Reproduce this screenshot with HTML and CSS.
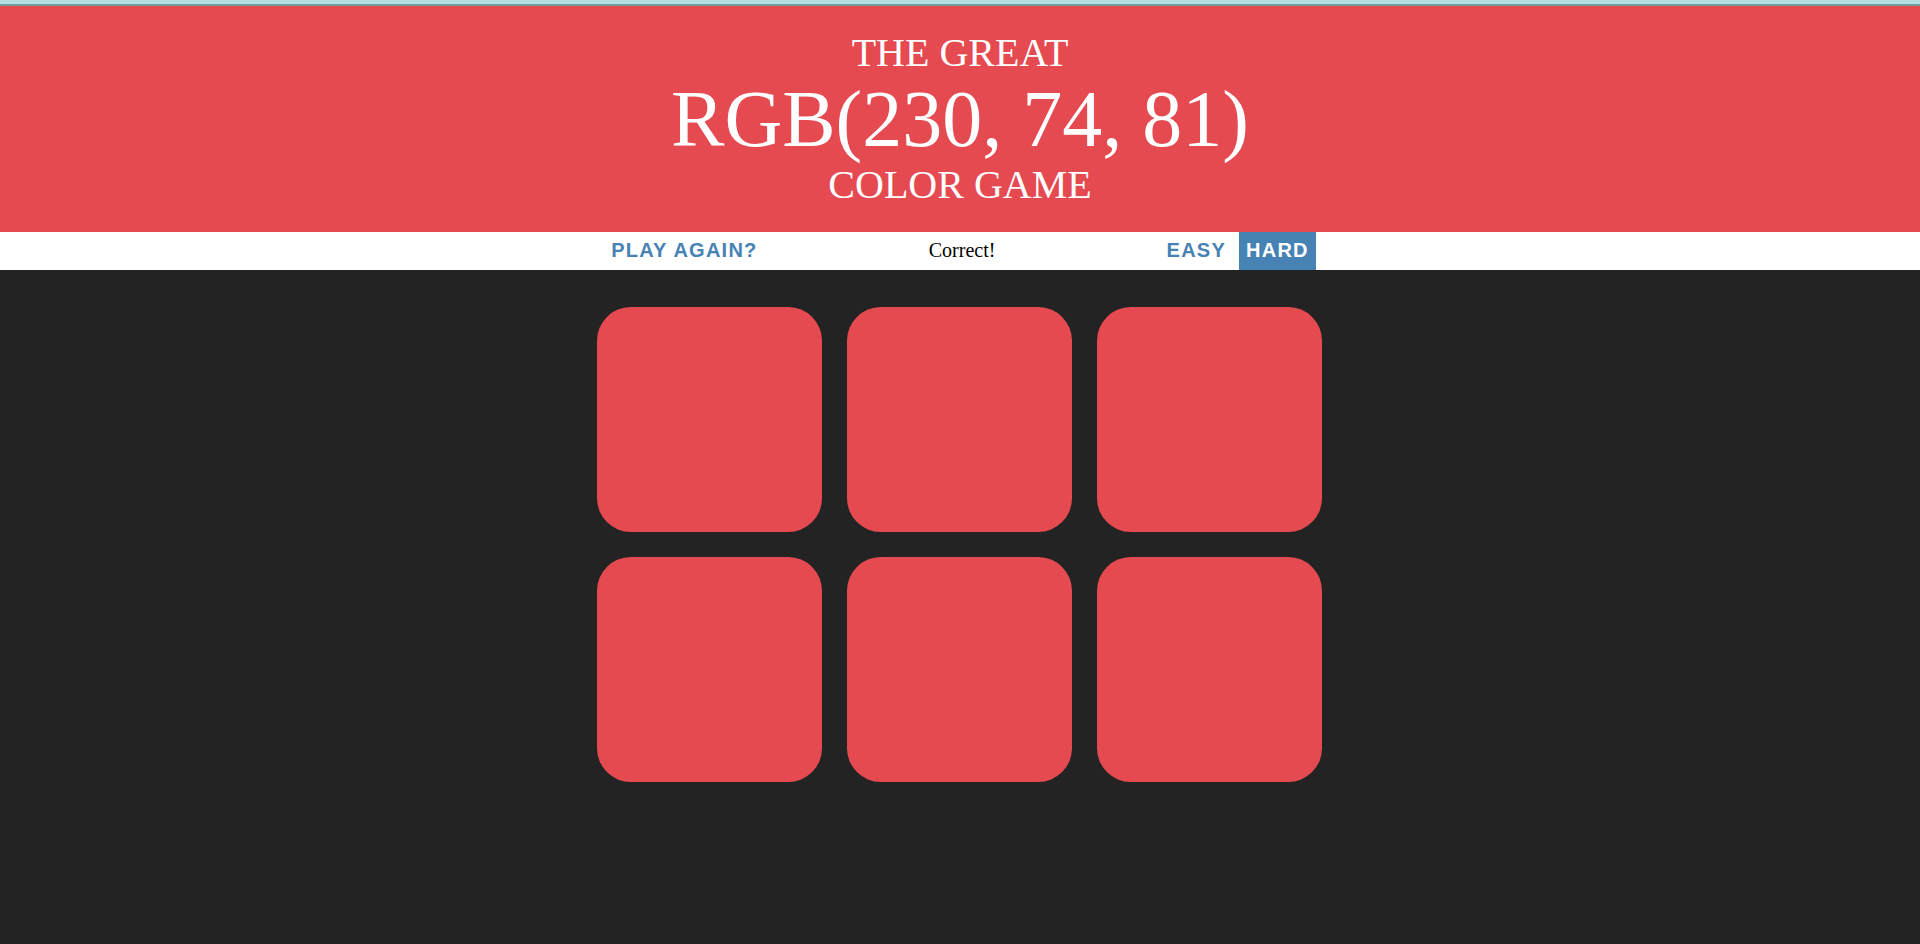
FILE: index.html
```html
<!DOCTYPE html>
<html lang="en">
<head>
<meta charset="utf-8">
<title>Color Game</title>
<link rel="stylesheet" href="styles.css">
</head>
<body>
<div class="topline"></div>
<h1 class="title">The Great<br><span class="color-display">RGB(230, 74, 81)</span><br>Color Game</h1>
<div class="stripe">
  <button class="btn">Play Again?</button>
  <span class="message">Correct!</span>
  <button class="btn">Easy</button>
  <button class="btn selected">Hard</button>
</div>
<div class="board">
  <div class="square"></div>
  <div class="square"></div>
  <div class="square"></div>
  <div class="square"></div>
  <div class="square"></div>
  <div class="square"></div>
</div>
</body>
</html>
```
FILE: styles.css
```css
html, body {
  margin: 0;
  padding: 0;
}
body {
  background: #232323;
  font-family: "Liberation Serif", "Times New Roman", serif;
  font-size: 20px;
  min-height: 944px;
}
.topline {
  height: 4px;
  background: #b3dfe0;
  border-bottom: 2px solid #6f9ea1;
}
.title {
  margin: 0;
  padding: 25px 0;
  background: rgb(230, 74, 81);
  color: #fff;
  text-align: center;
  text-transform: uppercase;
  font-weight: normal;
  font-size: 40px;
  line-height: 1.1;
}
.color-display {
  font-size: 200%;
}
.stripe {
  background: #fff;
  height: 37.5px;
  text-align: center;
  color: #000;
}
.btn {
  border: none;
  background: none;
  text-transform: uppercase;
  height: 100%;
  font-family: "Liberation Sans", Arial, sans-serif;
  font-weight: 700;
  font-size: 20px;
  color: steelblue;
  letter-spacing: 1.25px;
  padding: 1.25px 7.5px;
  margin: 0;
  vertical-align: top;
  outline: none;
}
.btn.selected {
  color: #fff;
  background: steelblue;
}
.message {
  display: inline-block;
  width: 20%;
  line-height: 37.5px;
  vertical-align: top;
}
.board {
  width: 750px;
  margin: 25px auto 0;
  display: flex;
  flex-wrap: wrap;
}
.square {
  width: 30%;
  aspect-ratio: 1 / 1;
  margin: 1.66%;
  background: rgb(230, 74, 81);
  border-radius: 15%;
}
```
